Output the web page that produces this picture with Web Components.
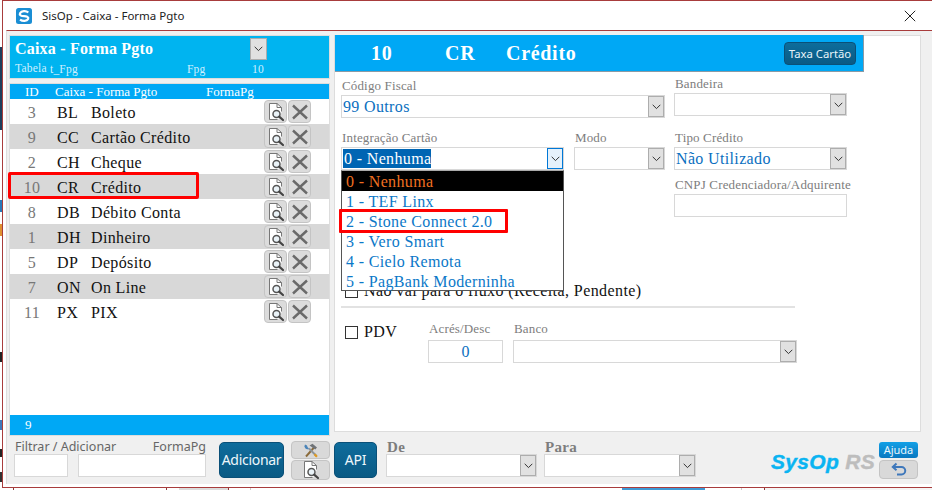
<!DOCTYPE html>
<html><head><meta charset="utf-8">
<style>
html,body{margin:0;padding:0;width:932px;height:490px;overflow:hidden;background:#fff}
</style></head><body>
<sysop-window>
  <sysop-titlebar slot="title">SisOp - Caixa - Forma Pgto</sysop-titlebar>
  <sysop-left slot="left"></sysop-left>
  <sysop-right slot="right"></sysop-right>
  <sysop-bottom slot="bottom"></sysop-bottom>
</sysop-window>
<script>
const SERIF='"Liberation Serif","DejaVu Serif",serif';
const SANS='"Noto Sans","Open Sans",sans-serif';
const ICON={
 doc:`<svg width="20" height="20" viewBox="0 0 20 20"><path d="M3.500 1.500h7.500l4.500 4v5l-3 6.500h-9z" fill="#fff"/><path d="M3.500 1.500h7.500l4.500 4v4M11 1.500v4h4.500M3.500 1.500v16h8" fill="none" stroke="#777" stroke-width="1"/><circle cx="10.500" cy="12" r="3.500" fill="#eaf3f8" stroke="#555" stroke-width="1.500"/><path d="M13.200 14.700l3.800 3.300" stroke="#444" stroke-width="2.200" stroke-linecap="round"/></svg>`,
 x:`<svg width="20" height="20" viewBox="0 0 20 20"><path d="M3 3.500L17 16.500M17 3.500L3 16.500" stroke="#6a6a6a" stroke-width="2.400"/></svg>`,
 tools:`<svg width="16" height="15" viewBox="0 0 16 15"><path d="M3 13.500L11 4.500" stroke="#8a6a3a" stroke-width="1.900"/><path d="M6.500 2.500L9.500 .8l4.500 3.700-1.700 2z" fill="#6f7378"/><path d="M13.500 13L6 5.500" stroke="#8d949a" stroke-width="1.900"/><path d="M2 1.500a3 3 0 0 0 4 4.300L4.500 4 4 2.500z" fill="#4a84b8"/><path d="M11.500 11.200l2.500 2.500" stroke="#e09a20" stroke-width="2.200"/></svg>`,
 back:`<svg width="16" height="15" viewBox="0 0 16 15"><path d="M5.500 1.500L1.800 5l3.700 3.200" fill="none" stroke="#3f78bb" stroke-width="2"/><path d="M2 5h8.500a3.700 3.700 0 0 1 0 7.500H6" fill="none" stroke="#3f78bb" stroke-width="2"/></svg>`,
 chev:`<svg width="9" height="6" viewBox="0 0 9 6"><path d="M.7 .8L4.500 4.600L8.300 .8" fill="none" stroke="#333" stroke-width="1"/></svg>`,
 logo:`<svg width="16" height="16" viewBox="0 0 16 16"><rect width="16" height="16" rx="2.500" fill="#1a8ed4"/><path d="M12.300 4.500C10 2.400 5.400 2.800 4 5.200c-.9 1.900 1.200 2.900 4 2.900s5 1.200 4.100 3c-1.200 2.300-5.500 2.400-8.100.5" fill="none" stroke="#fff" stroke-width="2.200"/></svg>`
};
function def(name,css,html){
  customElements.define(name,class extends HTMLElement{
    connectedCallback(){
      if(this.shadowRoot)return;
      const r=this.attachShadow({mode:'open'});
      r.innerHTML=`<style>${css}</style>`+(typeof html==='function'?html(this):html);
    }
  });
}
def('sysop-window',`
 :host{display:block;width:932px;height:490px;position:relative;background:#fff;overflow:hidden}
 .frame{position:absolute;left:2px;top:0;right:0;height:488px;border:solid #a83c3c;border-width:1px 0 1px 1px;box-sizing:border-box;display:flex;flex-direction:column;background:#fff}
 .body{height:454px;flex:none;margin-left:3px;border-top:1px solid #a83c3c;border-left:1px solid #ddd;background:#f0f0f0;display:flex;flex-direction:column;box-sizing:border-box}
 .main{display:flex;gap:4px;padding:4px 0 0 2px;height:405px;box-sizing:border-box;align-items:flex-start;flex:none}
 i{position:absolute;display:block}
 .u{top:488px;height:2px}
`,`<div class="frame"><slot name="title"></slot><div class="body"><div class="main"><slot name="left"></slot><slot name="right"></slot></div><slot name="bottom"></slot></div></div>
 <i style="left:0;top:47px;width:2px;height:83px;background:#1e3d5c"></i><i style="left:0;top:200px;width:2px;height:12px;background:#2a78b8"></i><i style="left:0;top:224px;width:2px;height:12px;background:#e09030"></i><i style="left:0;top:352px;width:2px;height:10px;background:#222"></i><i style="left:0;top:420px;width:2px;height:10px;background:#3f78bb"></i><i style="left:0;top:449px;width:2px;height:8px;background:#222"></i><i style="left:0;top:472px;width:2px;height:10px;background:#333"></i>
 <i class="u" style="left:13px;width:1px;background:#8c3a3a"></i><i class="u" style="left:166px;width:1px;background:#8c3a3a"></i><i class="u" style="left:179px;width:49px;background:#dcdcdc"></i><i class="u" style="left:228px;width:1px;background:#8c3a3a"></i><i class="u" style="left:250px;width:1px;background:#ccc"></i><i class="u" style="left:622px;width:83px;background:#3f9ad6"></i><i class="u" style="left:741px;width:1px;background:#ccc"></i><i class="u" style="left:764px;width:1px;background:#8c3a3a"></i><i class="u" style="left:765px;width:167px;background:#f5f5f5"></i>`);
def('sysop-titlebar',`
 :host{display:flex;align-items:center;height:29px;box-sizing:border-box;padding-left:13px;font:11.5px ${SANS};color:#222;flex:none}
 .t{margin-left:10px;flex:1}
 .x{width:40px;display:flex;justify-content:center;padding-right:5px;box-sizing:border-box}
`,`${ICON.logo}<span class="t"><slot></slot></span><span class="x"><svg width="12" height="12" viewBox="0 0 12 12"><path d="M.8 .8L11.200 11.200M11.200 .8L.8 11.200" stroke="#222" stroke-width="1"/></svg></span>`);
def('sysop-select',`
 :host{display:block;box-sizing:border-box;height:23px;background:#fff;border:1px solid #d8d8d8;font:16px ${SERIF};letter-spacing:.35px;color:#0b6fc0;position:relative}
 .wrap{display:flex;height:100%;align-items:center;padding-left:1px}
 .v{flex:1;white-space:nowrap;overflow:hidden;line-height:21px}
 .v b{font-weight:400}
 :host([sel]) .v b{background:#0065b3;color:#fff;padding:0 0 0 1px;display:inline-block;height:19px;line-height:19px}
 .btn{width:16px;height:21px;box-sizing:border-box;background:#e1e1e1;border:1px solid #adadad;display:flex;align-items:center;justify-content:center}
 :host([sel]) .btn{background:#e5f1fb;border-color:#0078d7}
`,h=>`<div class="wrap"><span class="v"><b>${h.getAttribute('value')||''}</b></span><span class="btn">${ICON.chev}</span></div>`);
def('sysop-field',`
 :host{display:block;box-sizing:border-box;font:13px ${SERIF};letter-spacing:.15px;color:#7d7d7d}
 label{display:block;height:18px;line-height:18px;white-space:nowrap;padding-left:1px}
 :host([tall]) label{height:20px}
`,h=>`<label>${h.getAttribute('label')||''}</label><slot></slot>`);
def('sysop-input',`
 :host{display:block;box-sizing:border-box;height:23px;background:#fff;border:1px solid #d8d8d8;font:16px ${SERIF};color:#0b6fc0;text-align:center;line-height:21px}
`,`<slot></slot>`);
def('sysop-check',`
 :host{display:flex;align-items:center;box-sizing:border-box;font:16px ${SERIF};letter-spacing:.42px;color:#111;padding-left:4px;height:16px}
 i{width:11px;height:11px;border:1px solid #333;background:#fff;margin-right:6px;flex:none}
 span{white-space:nowrap}
`,`<i></i><span><slot></slot></span>`);
def('sysop-iconbtn',`
 :host{display:flex;align-items:center;justify-content:center;box-sizing:border-box;width:23px;height:23px;background:#dcdcdc;border:1px solid #c4c4c4;border-radius:4px}
`,`<slot></slot>`);
def('sysop-row',`
 :host{display:flex;align-items:center;height:25px;box-sizing:border-box;position:relative;font:16px ${SERIF};letter-spacing:.35px;color:#111;background:#fff}
 :host([alt]){background:#d8d8d8}
 .txt{display:flex;flex:1;padding-top:2px}
 .id{width:44px;text-align:center;color:#777}
 .cd{width:34px;margin-left:3px}
 .nm{flex:1}
 .acts{display:flex;gap:1px;margin-right:18px}
 .hl{position:absolute;left:-2px;top:-2px;width:191px;height:27px;border:3px solid #f00;border-radius:2px;box-sizing:border-box;display:none}
 :host([mark]) .hl{display:block}
`,h=>`<span class="txt"><span class="id">${h.getAttribute('n')}</span><span class="cd">${h.getAttribute('c')}</span><span class="nm">${h.getAttribute('t')}</span></span><span class="acts"><sysop-iconbtn>${ICON.doc}</sysop-iconbtn><sysop-iconbtn>${ICON.x}</sysop-iconbtn></span><span class="hl"></span>`);
def('sysop-left',`
 :host{display:flex;flex-direction:column;width:321px;height:401px;gap:4px;color:#fff;flex:none}
 .hd{height:44px;box-sizing:border-box;border:1px solid #ddd;background:#00b4f0;position:relative;padding-left:5px;font:11.5px ${SERIF};letter-spacing:.2px;color:#cfefff;flex:none}
 .ttl{font:bold 16px ${SERIF};letter-spacing:.2px;color:#fff;height:24px;line-height:25px}
 .sub{display:grid;grid-template-columns:35px 137px 65px auto;height:17px;line-height:17px}
 .sub span+span{padding-top:1px}
 .dd{width:17px;height:22px;top:2px;left:240px;background:#e1e1e1;border:1px solid #adadad;box-sizing:border-box;display:flex;align-items:center;justify-content:center;position:absolute}
 .list{height:353px;box-sizing:border-box;border:1px solid #ddd;background:#fff;display:flex;flex-direction:column;flex:none}
 .th{height:15px;background:#00a8f5;font:13px ${SERIF};color:#fff;display:flex;align-items:center;flex:none;line-height:15px}
 .th span:nth-child(1){margin-left:15px;width:30px}
 .th span:nth-child(2){width:151px}
 .rows{flex:1}
 .ft{height:20px;background:#00a8f5;font:13px ${SERIF};color:#fff;padding-left:15px;line-height:20px;flex:none}
`,`<div class="hd"><div class="ttl">Caixa - Forma Pgto</div><div class="sub"><span>Tabela</span><span>t_Fpg</span><span>Fpg</span><span>10</span></div><span class="dd">${ICON.chev}</span></div>
 <div class="list"><div class="th"><span>ID</span><span>Caixa - Forma Pgto</span><span>FormaPg</span></div>
 <div class="rows">
 <sysop-row n="3" c="BL" t="Boleto"></sysop-row>
 <sysop-row alt n="9" c="CC" t="Cartão Crédito"></sysop-row>
 <sysop-row n="2" c="CH" t="Cheque"></sysop-row>
 <sysop-row alt mark n="10" c="CR" t="Crédito"></sysop-row>
 <sysop-row n="8" c="DB" t="Débito Conta"></sysop-row>
 <sysop-row alt n="1" c="DH" t="Dinheiro"></sysop-row>
 <sysop-row n="5" c="DP" t="Depósito"></sysop-row>
 <sysop-row alt n="7" c="ON" t="On Line"></sysop-row>
 <sysop-row n="11" c="PX" t="PIX"></sysop-row>
 </div><div class="ft">9</div></div>`);
def('sysop-right',`
 :host{display:block;width:587px;height:397px;box-sizing:border-box;border:1px solid #ddd;background:#fff;position:relative;flex:none}
 .hd{width:529px;height:37px;box-sizing:border-box;margin-top:-1px;background:#00a8f5;border-bottom:1px solid #8a9aa5;border-right:1px solid #8a9aa5;display:flex;align-items:center;font:bold 20px ${SERIF};letter-spacing:.7px;color:#fff}
 .hd span:nth-child(1){margin-left:36px;width:74px}
 .hd span:nth-child(2){width:61px}
 .hd span:nth-child(3){flex:1}
 .btn{font:11.3px ${SANS};font-weight:400;letter-spacing:0;width:72px;height:23px;margin-right:7px;background:linear-gradient(#0d6d9b,#0a5a84);border:1px solid #0a5078;border-radius:4px;box-sizing:border-box;text-align:center;line-height:21px;color:#e8f4fa}
 .form{padding:5px 0 0 6px}
 .r{display:flex;gap:9px}
 hr{border:0;border-top:2px solid #e2e2e2;width:454px;margin:7px 0 12px;height:0}
 .drop{position:absolute;left:6px;top:134px;width:223px;height:121px;box-sizing:border-box;background:#fff;border:1px solid #555;border-top-color:#aaa;font:16px ${SERIF};letter-spacing:.35px;color:#0b78c8;z-index:3;display:flex;flex-direction:column}
 .drop div{height:20px;line-height:21px;padding-left:4px;white-space:nowrap;flex:none;position:relative}
 .drop .on{background:#000;color:#f07020}
 .drop .hl::after{content:"";position:absolute;left:-3px;top:-2px;width:169px;height:24px;border:3px solid #f00;border-radius:1px;box-sizing:border-box}
`,`<div class="hd"><span>10</span><span>CR</span><span>Crédito</span><span class="btn">Taxa Cartão</span></div>
 <div class="form">
  <div class="r">
    <sysop-field label="Código Fiscal" style="width:324px"><sysop-select value="99 Outros"></sysop-select></sysop-field>
    <sysop-field label="Bandeira" style="width:173px;margin-top:-2px"><sysop-select></sysop-select></sysop-field>
  </div>
  <div class="r" style="margin-top:11px">
    <sysop-field label="Integração Cartão" style="width:223px;margin-right:1px"><sysop-select sel value="0 - Nenhuma"></sysop-select></sysop-field>
    <sysop-field label="Modo" style="width:91px"><sysop-select></sysop-select></sysop-field>
    <sysop-field label="Tipo Crédito" style="width:173px"><sysop-select value="Não Utilizado"></sysop-select></sysop-field>
  </div>
  <div class="r" style="margin-top:6px">
    <sysop-field label="CNPJ Credenciadora/Adquirente" style="width:173px;margin-left:333px"><sysop-input></sysop-input></sysop-field>
  </div>
  <div class="r" style="margin-top:66px"><sysop-check>Não vai para o fluxo (Receita, Pendente)</sysop-check></div>
  <hr>
  <div class="r" style="gap:0">
    <sysop-check style="width:87px;margin-top:4px">PDV</sysop-check>
    <sysop-field tall label="Acrés/Desc" style="width:75px;margin-right:10px"><sysop-input>0</sysop-input></sysop-field>
    <sysop-field tall label="Banco" style="width:284px"><sysop-select></sysop-select></sysop-field>
  </div>
 </div>
 <div class="drop"><div class="on">0 - Nenhuma</div><div>1 - TEF Linx</div><div class="hl">2 - Stone Connect 2.0</div><div>3 - Vero Smart</div><div>4 - Cielo Remota</div><div>5 - PagBank Moderninha</div></div>`);
def('sysop-bottom',`
 :host{display:flex;padding:6px 0 0 7px;box-sizing:border-box;flex:1;align-items:flex-start}
 .f{font:12.5px ${SANS};color:#666;position:relative}
 .f label{display:block;line-height:16px;white-space:nowrap;position:absolute;top:-3px;left:1px}
 .inp{display:flex;gap:10px;padding-top:12px;width:192px;flex:none}
 sysop-input{flex:none}
 .big{height:36px;box-sizing:border-box;background:linear-gradient(#0e6c9c,#0a5a84);border:1px solid #0a5078;border-radius:5px;color:#eef7fb;font:14px ${SANS};letter-spacing:-.3px;line-height:34px;text-align:center;flex:none}
 .sm{display:flex;flex-direction:column;gap:1px;width:39px;margin:-1px 4px 0 7px;flex:none}
 .sm span{height:18px;box-sizing:border-box;background:#d9d9d9;border:1px solid #c4c4c4;border-radius:4px;display:flex;align-items:center;justify-content:center}
 .sel{font:bold 15px ${SERIF};letter-spacing:.3px;color:#7d7d7d;flex:none}
 .sel label{display:block;height:12px;line-height:11px;padding-left:1px}
 .logo{font:italic 700 21px "Liberation Sans",sans-serif;-webkit-text-stroke:.4px currentColor;letter-spacing:.3px;color:#0ab4f2;margin-left:75px;margin-top:8px;white-space:nowrap;width:108px;flex:none}
 .logo em{color:#bdbdbd;font-style:inherit}
 .help{width:39px;display:flex;flex-direction:column;gap:2px;flex:none}
 .aj{height:16px;background:linear-gradient(#12a0e6,#0a78c0);border-radius:3px;color:#eaf6fc;font:11px ${SANS};text-align:center;line-height:15px}
 .bk{height:19px;box-sizing:border-box;background:#d9d9d9;border:1px solid #c4c4c4;border-radius:4px;display:flex;align-items:center;justify-content:center}
`,`<div class="f inp"><label>Filtrar / Adicionar</label><label style="left:auto;right:0">FormaPg</label><sysop-input style="width:54px"></sysop-input><sysop-input style="width:128px"></sysop-input></div>
 <span class="big" style="width:65px;margin-left:13px">Adicionar</span>
 <div class="sm"><span>${ICON.tools}</span><span style="height:20px">${ICON.doc}</span></div>
 <span class="big" style="width:43px">API</span>
 <div class="sel" style="margin-left:9px;width:151px;margin-right:7px"><label>De</label><sysop-select></sysop-select></div>
 <div class="sel" style="width:152px"><label>Para</label><sysop-select></sysop-select></div>
 <div class="logo">SysOp <em>RS</em></div>
 <div class="help"><div class="aj">Ajuda</div><div class="bk">${ICON.back}</div></div>`);
</script>
</body></html>
